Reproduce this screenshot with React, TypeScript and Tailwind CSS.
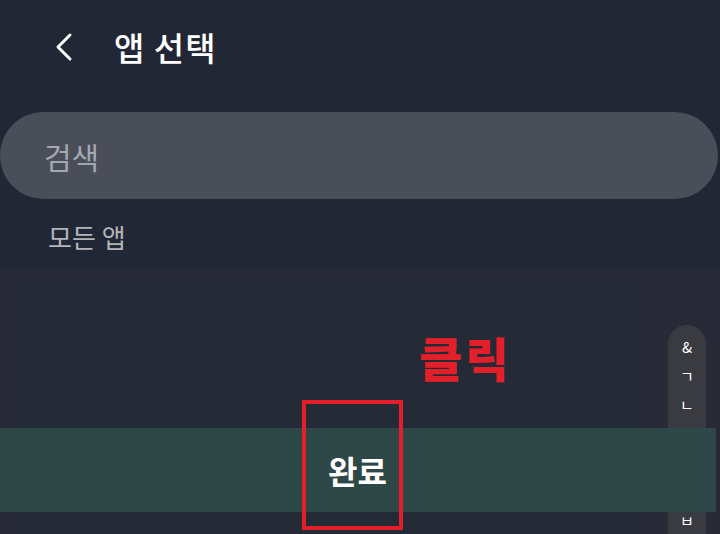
import React from 'react';

// index letters shown in the fast-scroll pill on the right
const indexLetters = ['&', 'ㄱ', 'ㄴ', 'ㄷ', 'ㄹ', 'ㅁ', 'ㅂ', 'ㅅ'];

export default function App() {
  return (
    <div
      className="relative w-[720px] h-[534px] overflow-hidden bg-[#222735] text-white"
      style={{ fontFamily: '"Noto Sans CJK KR", "Noto Sans", sans-serif' }}
    >
      {/* header */}
      <div className="flex items-center h-[94px] pl-[52px]">
        <svg width="24" height="30" viewBox="0 0 24 30" className="mr-[38px]">
          <path d="M18 3 L6 15 L18 27" fill="none" stroke="#ffffff" strokeWidth="3" strokeLinecap="round" strokeLinejoin="round" />
        </svg>
        <span className="text-[33px] font-medium leading-none tracking-[1px]">앱 선택</span>
      </div>

      {/* search */}
      <div className="mt-[18px] w-[718px] h-[87px] rounded-full bg-[#4a4e59] flex items-center pl-[44px]">
        <span className="text-[30px] leading-none text-[#a4a7ae]">검색</span>
      </div>

      {/* section label */}
      <div className="h-[70px] flex items-center pl-[48px] pt-[6px]">
        <span className="text-[26px] leading-none text-[#b3b5bb]">모든 앱</span>
      </div>

      {/* list area */}
      <div className="h-[300px] bg-[#282b37] pt-[8px] flex">
        <div className="ml-[15px] w-[630px] h-full bg-[#252a37]" />
        <div className="flex-1 flex justify-start pl-[23px] pt-[48px]">
          <div className="w-[38px] h-[400px] rounded-t-full bg-[#3a3b41] flex flex-col items-center pt-[12px] gap-[9px]">
            {indexLetters.map((l) => (
              <span key={l} className="text-[15px] leading-[20px] text-white">{l}</span>
            ))}
          </div>
        </div>
      </div>

      {/* done bar overlay */}
      <div className="absolute left-0 top-[428px] w-[716px] h-[84px] bg-[#2e4747] flex items-center pl-[328px]">
        <span className="text-[32px] font-bold leading-none text-white">완료</span>
      </div>

      {/* annotation */}
      <div className="absolute left-[302px] top-[400px] w-[101px] h-[130px] border-[4px] border-[#e3202a]" />
      <div className="absolute left-[419px] top-[333px] text-[47px] font-black leading-none text-[#e3202a] tracking-[3px]">
        클릭
      </div>
    </div>
  );
}
